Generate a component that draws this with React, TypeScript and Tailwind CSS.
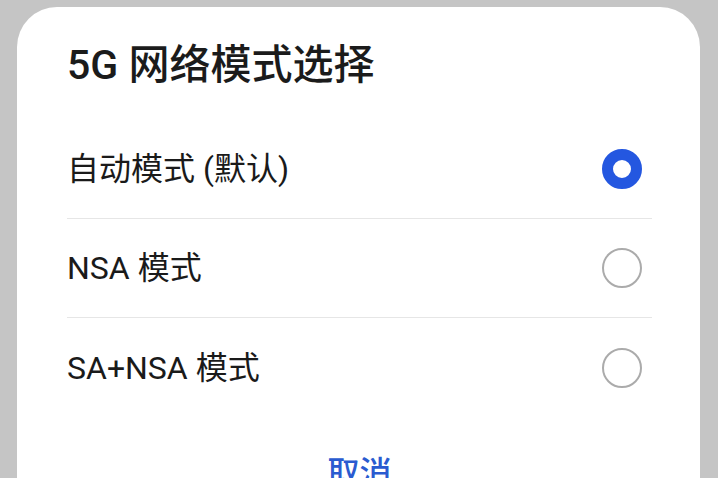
import { useState } from 'react';

// 5G network mode picker, shown as a bottom sheet over a dimmed screen.
const MODES = ['自动模式 (默认)', 'NSA 模式', 'SA+NSA 模式'];

const FONT = "font-['Roboto','Noto_Sans_CJK_SC',sans-serif]";

function Radio({ checked }: { checked: boolean }) {
  return checked ? (
    <span className="block size-[40px] rounded-full border-[11px] border-[#2457e0]" />
  ) : (
    <span className="block size-[40px] rounded-full border-2 border-[#ababab]" />
  );
}

export default function App() {
  const [selected, setSelected] = useState(0);

  return (
    <div className={`h-[478px] w-[718px] overflow-hidden bg-[#c5c5c5] pl-[17px] pr-[18px] pt-[7px] ${FONT}`}>
      <div className="h-full rounded-t-[40px] bg-white pl-[50px] pr-[48px]">
        <h1 className="pt-[34px] text-[41px] leading-[48px] font-medium text-[#1b1b1b]">
          5G 网络模式选择
        </h1>

        <div className="mt-[31px] flex flex-col">
          {MODES.map((m, i) => (
            <button
              key={m}
              onClick={() => setSelected(i)}
              className={`flex h-[99px] items-center justify-between text-left ${
                i < MODES.length - 1 ? 'border-b border-[#e6e6e6]' : ''
              }`}
            >
              <span className="text-[32px] leading-[40px] text-[#1a1a1a]">{m}</span>
              <span className="mr-[10px]">
                <Radio checked={selected === i} />
              </span>
            </button>
          ))}
        </div>

        <div className="mt-[36px] text-center text-[32px] leading-[40px] font-medium text-[#2a5bd0]">
          取消
        </div>
      </div>
    </div>
  );
}
